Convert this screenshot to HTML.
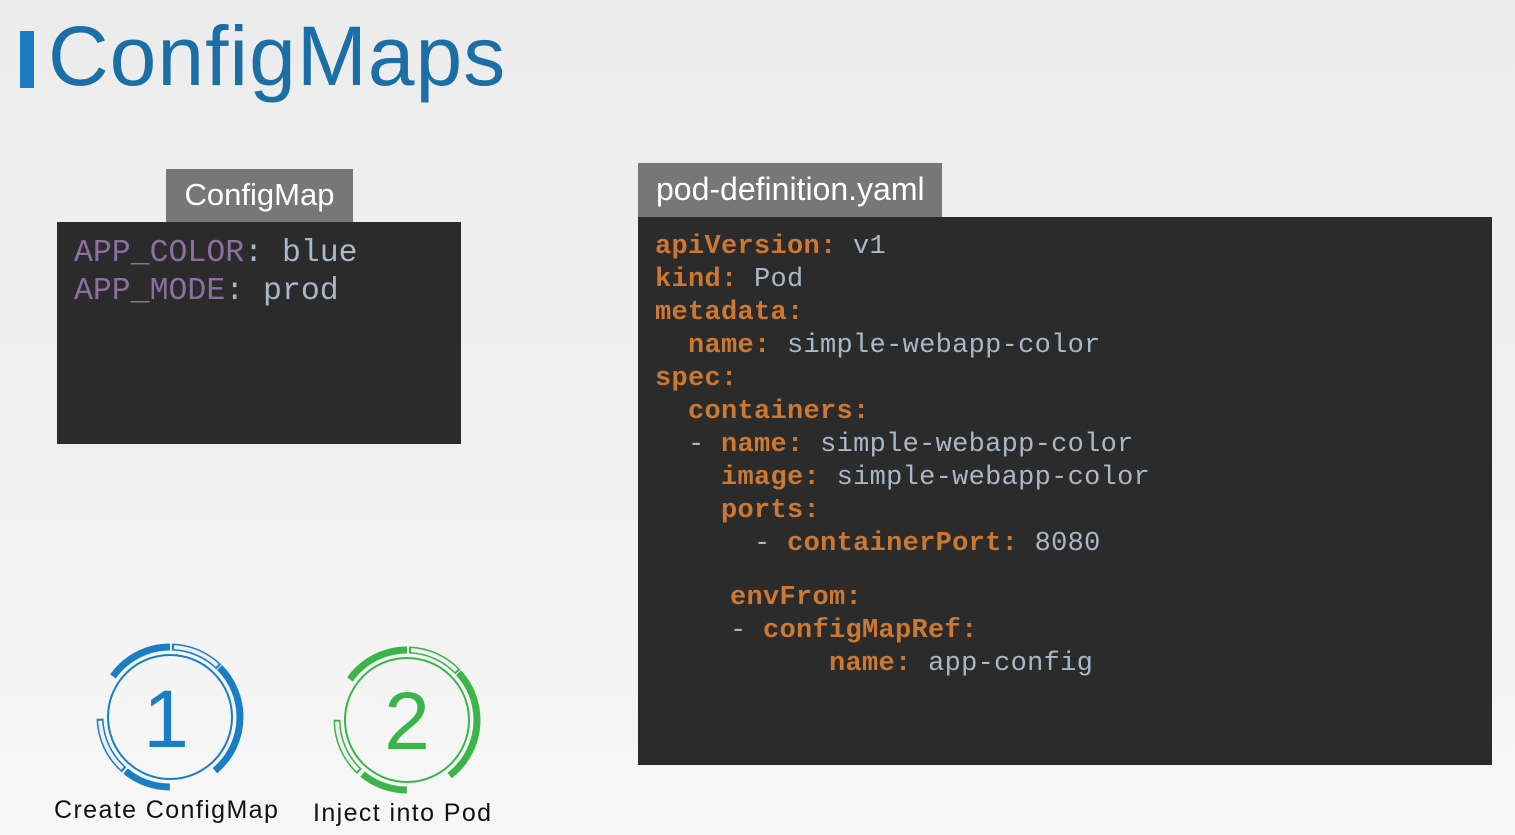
<!DOCTYPE html>
<html><head><meta charset="utf-8"><style>
html,body{margin:0;padding:0}
body{width:1515px;height:835px;position:relative;overflow:hidden;background:linear-gradient(180deg,#ececec 0%,#f1f1f1 60%,#f7f7f7 100%);font-family:"Liberation Sans",sans-serif}
.abs{position:absolute}
.title{left:48px;top:8px;font-size:84px;color:#1b6ea6;letter-spacing:1px;line-height:96px}
.bar{left:20px;top:31px;width:14px;height:57px;background:#1b7cc4}
.tab{background:#777;color:#fff;font-size:31px;line-height:52px}
.box{background:#2b2b2b}
.code{font-family:"Liberation Mono",monospace;white-space:pre;position:absolute}
.k{color:#cc7832;font-weight:bold}
.v{color:#a9b7c6}
.p{color:#8a6fa0}
.y{font-size:27px;line-height:33px}
.lbl{font-size:25px;color:#111;letter-spacing:1.4px}
</style></head><body>
<div class="abs bar"></div>
<div class="abs title">ConfigMaps</div>

<div class="abs tab" style="left:166px;top:169px;width:187px;height:53px;text-align:center">ConfigMap</div>
<div class="abs box" style="left:57px;top:222px;width:404px;height:222px"></div>
<div class="code" style="left:74px;top:235px;font-size:31.5px;line-height:38px"><span class="p">APP_COLOR</span><span class="v">: blue</span>
<span class="p">APP_MODE</span><span class="v">: prod</span></div>

<div class="abs tab" style="left:638px;top:163px;width:304px;height:54px;padding-left:18px;box-sizing:border-box;font-size:32px">pod-definition.yaml</div>
<div class="abs box" style="left:638px;top:217px;width:854px;height:548px"></div>
<div class="code y" style="left:655px;top:231px;letter-spacing:0.3px"><span class="k">apiVersion:</span> <span class="v">v1</span>
<span class="k">kind:</span> <span class="v">Pod</span>
<span class="k">metadata:</span>
  <span class="k">name:</span> <span class="v">simple-webapp-color</span>
<span class="k">spec:</span>
  <span class="k">containers:</span>
  <span class="v">-</span> <span class="k">name:</span> <span class="v">simple-webapp-color</span>
    <span class="k">image:</span> <span class="v">simple-webapp-color</span>
    <span class="k">ports:</span>
      <span class="v">-</span> <span class="k">containerPort:</span> <span class="v">8080</span></div>
<div class="code y" style="left:730px;top:582px;letter-spacing:0.3px"><span class="k">envFrom:</span>
<span class="v">-</span> <span class="k">configMapRef:</span>
      <span class="k">name:</span> <span class="v">app-config</span></div>

<svg class="abs" style="left:0;top:600px" width="520" height="200">
 <g transform="translate(170,117) rotate(-90)">
  <circle r="62" fill="none" stroke="#1a7ec4" stroke-width="2"/>
  <circle r="70" fill="none" stroke="#1a7ec4" stroke-width="7" stroke-dasharray="67 440" stroke-dashoffset="-373"/>
  <circle r="70" fill="none" stroke="#1a7ec4" stroke-width="7" stroke-dasharray="116 440" stroke-dashoffset="-55"/>
  <circle r="70" fill="none" stroke="#1a7ec4" stroke-width="7" stroke-dasharray="48 440" stroke-dashoffset="-220"/>
  <circle r="70" fill="none" stroke="#1a7ec4" stroke-width="7" stroke-dasharray="52 440" stroke-dashoffset="-2"/>
  <circle r="70" fill="none" stroke="#efefef" stroke-width="4" stroke-dasharray="48 440" stroke-dashoffset="-4"/>
  <circle r="70" fill="none" stroke="#1a7ec4" stroke-width="7" stroke-dasharray="58 440" stroke-dashoffset="-270"/>
  <circle r="70" fill="none" stroke="#efefef" stroke-width="4" stroke-dasharray="54 440" stroke-dashoffset="-272"/>
 </g>
 <text x="166" y="147" font-family="Liberation Sans" font-size="82" fill="#1a7ec4" text-anchor="middle">1</text>
 <g transform="translate(407,120) rotate(-90)">
  <circle r="62" fill="none" stroke="#3bb54a" stroke-width="2"/>
  <circle r="70" fill="none" stroke="#3bb54a" stroke-width="7" stroke-dasharray="67 440" stroke-dashoffset="-373"/>
  <circle r="70" fill="none" stroke="#3bb54a" stroke-width="7" stroke-dasharray="116 440" stroke-dashoffset="-58"/>
  <circle r="70" fill="none" stroke="#3bb54a" stroke-width="7" stroke-dasharray="48 440" stroke-dashoffset="-220"/>
  <circle r="70" fill="none" stroke="#3bb54a" stroke-width="7" stroke-dasharray="55 440" stroke-dashoffset="-2"/>
  <circle r="70" fill="none" stroke="#efefef" stroke-width="4" stroke-dasharray="51 440" stroke-dashoffset="-4"/>
  <circle r="70" fill="none" stroke="#3bb54a" stroke-width="7" stroke-dasharray="58 440" stroke-dashoffset="-272"/>
  <circle r="70" fill="none" stroke="#efefef" stroke-width="4" stroke-dasharray="54 440" stroke-dashoffset="-274"/>
 </g>
 <text x="407" y="149" font-family="Liberation Sans" font-size="82" fill="#3bb54a" text-anchor="middle">2</text>
</svg>

<div class="abs lbl" style="left:54px;top:796px">Create ConfigMap</div>
<div class="abs lbl" style="left:313px;top:799px">Inject into Pod</div>
</body></html>
